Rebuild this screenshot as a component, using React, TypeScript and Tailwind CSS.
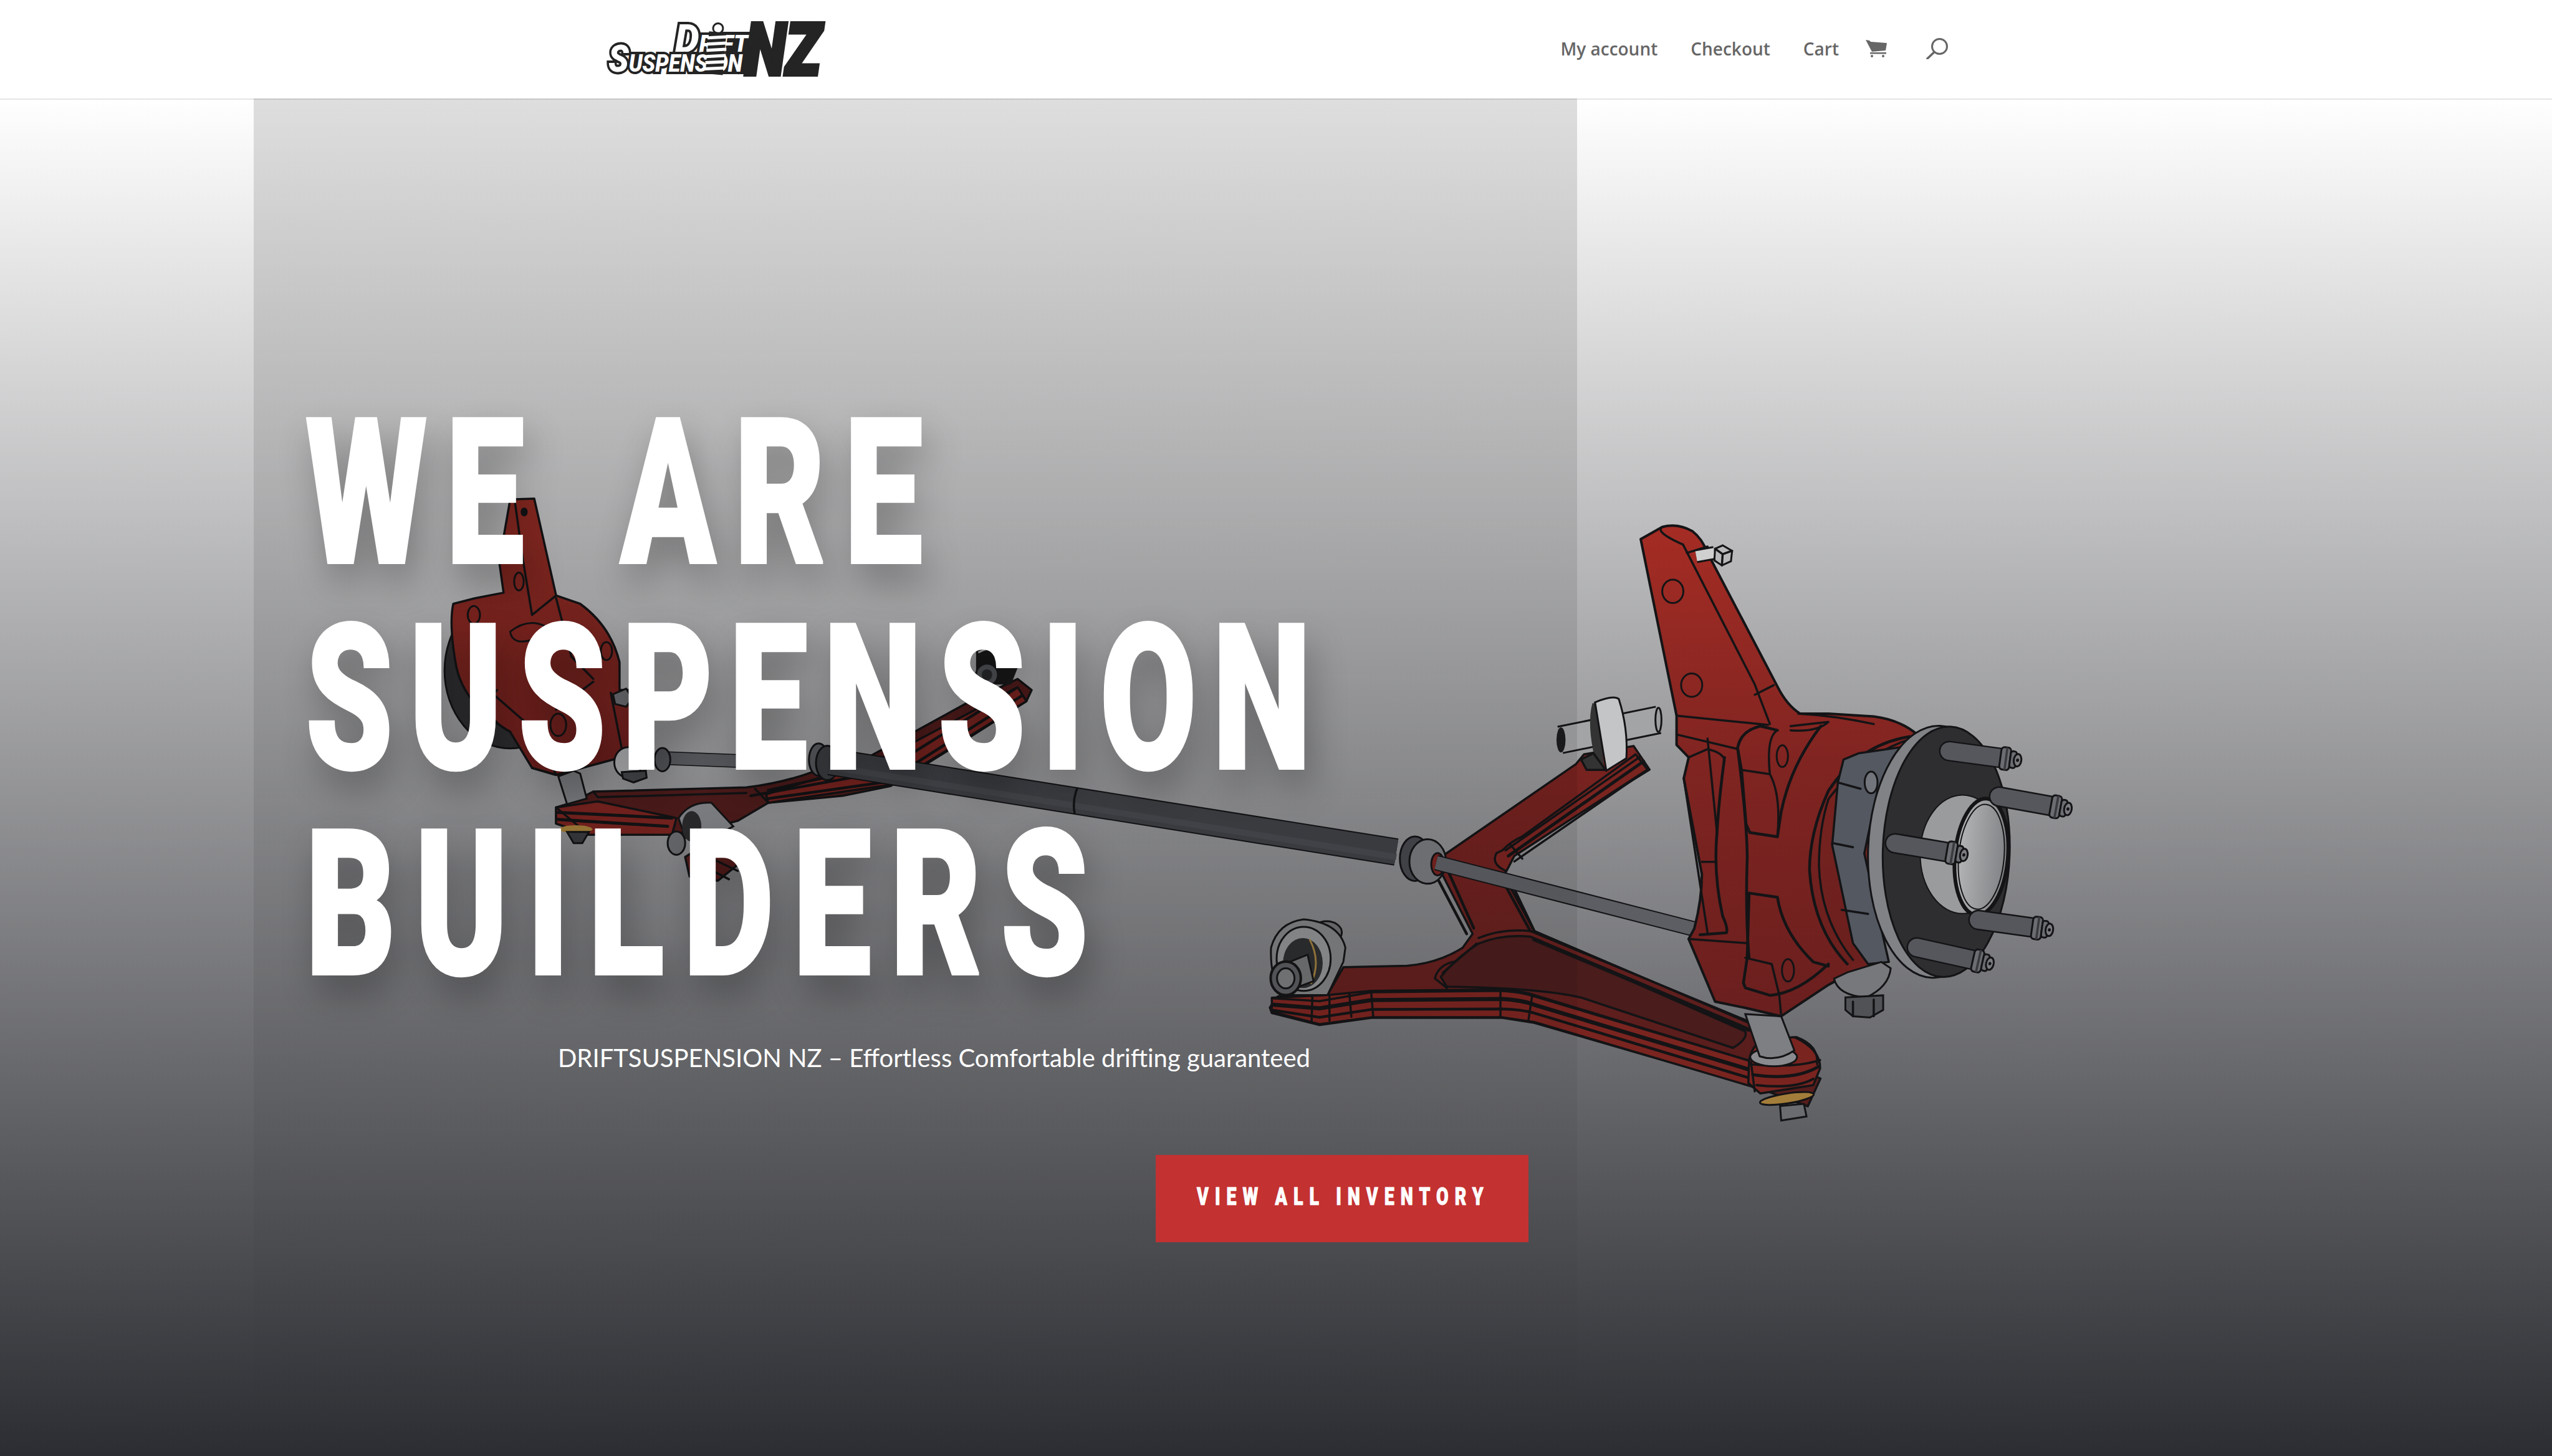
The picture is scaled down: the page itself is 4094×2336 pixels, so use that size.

import React from "react";

const K = "#141416";
const Z3 = "translate(2400 800) scale(0.6059 0.6697)";
const Z6 = "translate(1900 1150) scale(0.6378 0.4464)";
const Z4 = "translate(650 750) scale(0.7018 0.4464)";

function L({ d, w = 3.5, c = K, f = "none" }: { d: string; w?: number; c?: string; f?: string }) {
  return <path d={d} fill={f} stroke={c} strokeWidth={w} strokeLinejoin="round" strokeLinecap="round" />;
}

function Stud({ x1, y1, x2, y2 }: { x1: number; y1: number; x2: number; y2: number }) {
  const a = (Math.atan2(y2 - y1, x2 - x1) * 180) / Math.PI;
  return (
    <g>
      <path d={`M${x1} ${y1} L${x2} ${y2}`} stroke={K} strokeWidth={33} strokeLinecap="round" />
      <path d={`M${x1} ${y1} L${x2} ${y2}`} stroke="#55575c" strokeWidth={28} strokeLinecap="round" />
      <g transform={`translate(${x2} ${y2}) rotate(${a}) scale(0.6059 0.6697)`}>
        <rect x={0} y={-27} width={26} height={54} rx={8} fill="#6b6d72" stroke={K} strokeWidth={3} />
        <rect x={12} y={-27} width={6} height={54} fill="#3a3b3e" />
        <rect x={26} y={-20} width={16} height={40} rx={6} fill="#6b6d72" stroke={K} strokeWidth={3} />
        <ellipse cx={46} cy={0} rx={10} ry={15} fill="#7a7c80" stroke={K} strokeWidth={3} />
        <circle cx={46} cy={0} r={4} fill={K} />
      </g>
    </g>
  );
}

function RightAssembly() {
  return (
    <g>
      {/* thick tie rod */}
      <path d="M1331 1222 L2240 1367" stroke={K} strokeWidth={44} />
      <path d="M1331 1222 L2240 1367" stroke="#3e4045" strokeWidth={40} />
      <path d="M1331 1230 L2240 1375" stroke="#46484d" strokeWidth={10} />
      <L d="M1728 1265 Q1720 1285 1724 1305" />

      {/* lower arm */}
      <g transform={Z6}>
        <L
          f="url(#armRed)"
          d="M215 1045 L235 1005 L360 1000 L400 900 L560 895 Q640 885 700 830 L725 780 L650 570 L640 510 L660 490 L985 170 L1005 135 L1130 105 L1170 190 L830 490 L805 540 L815 600 L880 770 L1420 1100 L1460 1220 L1600 1300 L1568 1400 L1440 1332 L880 1100 L800 1082 L470 1082 L340 1108 L220 1065 Z"
        />
        <L f="#4a1c1c" d="M645 935 Q680 870 740 815 Q800 780 870 790 L1410 1130 Q1420 1155 1380 1190 L1000 1010 Q900 975 660 970 Z" />
        {/* upper branch bands */}
        <L f="#7a2420" d="M800 480 Q820 450 850 430 L1135 135 L1165 190 L830 500 L810 555 Q770 530 785 490 Z" />
        <L w={5} d="M815 500 L1155 160" />
        <L d="M808 480 L1145 145" />
        <L d="M830 520 L1165 190" />
        <L d="M820 460 L850 510" />
        <L d="M640 590 L710 780 M665 560 L728 760 M805 600 L870 770 M820 590 L880 770" w={4.5} />
        {/* lower bands */}
        <L f="#7a2420" d="M220 1010 L360 1000 L470 985 L800 980 Q850 985 880 1000 L1430 1240 L1430 1330 L880 1097 L800 1080 L470 1080 L340 1105 L220 1060 Z" />
        <L w={6.5} d="M225 1035 L340 1048 L470 1018 L800 1014 Q850 1018 880 1035 L1430 1272" />
        <L d="M225 1012 L340 1022 L470 990 L800 985 Q850 990 880 1005 L1430 1240" />
        <L w={4.5} d="M225 1055 L340 1080 L470 1052 L800 1050 Q850 1052 880 1065 L1430 1302" />
        <L d="M365 1005 L365 1092 M415 995 L420 1078 M470 990 L475 1078 M795 985 L795 1078 M875 1000 L865 1095 M322 1005 L320 1095" />
        <L w={6.5} d="M880 800 L1420 1125" />
        <L d="M870 770 L1420 1095" />
        <L d="M740 795 Q800 760 870 770 M680 880 Q640 890 630 940 L660 975 M735 815 L650 920" />

        {/* lower-left bushing */}
        <ellipse cx={358} cy={775} rx={38} ry={40} fill="#6b6c6e" stroke={K} strokeWidth={3} />
        <path d="M240 1000 L360 1000 L400 880 L405 830 Q390 740 300 728 Q235 740 218 830 Q215 920 240 1000 Z" fill="#7d7e80" stroke={K} strokeWidth={3} />
        <ellipse cx={300} cy={870} rx={68} ry={115} fill="#8d8e90" stroke={K} strokeWidth={3} />
        <ellipse cx={298} cy={885} rx={50} ry={90} fill="#2c2d2e" />
        <path d="M315 800 Q345 880 318 960" stroke="#9a7a3e" strokeWidth={3} fill="none" />
        <path d="M240 895 L310 855 L325 950 L260 985 Z" fill="#6f7072" stroke={K} strokeWidth={3} />
        <ellipse cx={255} cy={940} rx={38} ry={60} fill="#58595c" stroke={K} strokeWidth={4} />
        <ellipse cx={255} cy={940} rx={22} ry={36} fill="#77787a" stroke={K} strokeWidth={3} />

        {/* collar */}
        <ellipse cx={580} cy={510} rx={38} ry={80} fill="#45474c" stroke={K} strokeWidth={3} />
        <ellipse cx={612} cy={520} rx={46} ry={80} fill="#76787c" stroke={K} strokeWidth={3} />
        <ellipse cx={637} cy={530} rx={16} ry={40} fill="#7a2420" stroke={K} strokeWidth={3} />
      </g>

      {/* thin tie rod */}
      <path d="M2304 1384 L2716 1490" stroke={K} strokeWidth={25} />
      <path d="M2304 1384 L2716 1490" stroke="#5c5e63" strokeWidth={21} />

      {/* bushing on the upper branch */}
      <g transform={Z3}>
        <path d="M170 578 L430 530" stroke={K} strokeWidth={46} />
        <path d="M170 578 L430 530" stroke="#a3a4a6" strokeWidth={40} />
        <ellipse cx={172} cy={578} rx={12} ry={30} fill="#1c1c1e" />
        <ellipse cx={430} cy={530} rx={8} ry={29} fill="#9d9ea0" stroke={K} strokeWidth={3} />
        <path d="M255 490 Q240 540 262 625 L285 640 L270 490 Z" fill="#333" />
        <path d="M262 488 Q310 470 325 480 Q350 550 345 622 L292 652 Q275 560 262 488 Z" fill="#c4c5c6" stroke={K} strokeWidth={3} />
        <L f="#333" d="M225 625 L258 610 L290 650 L240 650 Z" />
      </g>

      {/* lower bolt and eye */}
      <g transform={Z3}>
        <path d="M752 1455 L815 1450 L822 1480 L755 1490 Z" fill="#6a6c70" stroke={K} strokeWidth={3} />
        <ellipse cx={770} cy={1437} rx={72} ry={12} fill="#a37d3a" stroke={K} strokeWidth={3} transform="rotate(-8 770 1437)" />
        <L f="#7a2420" d="M670 1345 Q680 1300 720 1295 L790 1290 Q860 1320 858 1365 L840 1405 L700 1425 L668 1400 Z" />
        <L w={5} d="M680 1380 Q790 1395 855 1360" />
        <L d="M675 1355 Q790 1365 858 1345" />
        <L w={4} d="M690 1405 Q790 1415 840 1390" />
        <L d="M675 1350 L685 1420 M795 1290 Q855 1310 850 1355" />
        <ellipse cx={735} cy={1338} rx={62} ry={22} fill="#8a8b8e" stroke={K} strokeWidth={3} />
        <path d="M660 1235 L755 1240 L790 1322 Q745 1350 698 1336 Z" fill="#7e7f82" stroke={K} strokeWidth={3} />
      </g>

      {/* steering knuckle */}
      <g transform={Z3}>
        <L
          f="url(#knuckle)"
          w={4}
          d="M383 97 L440 68 Q480 58 520 78 Q545 95 560 130 L745 450 Q770 495 805 515 L880 515 L1000 522 Q1070 530 1115 565 L1000 800 L1020 1110 L1005 1130 L940 1135 L880 1165 L755 1240 L660 1220 L580 1205 L510 1055 L525 1030 Q545 960 545 900 L497 670 L510 620 L478 590 L478 520 Z"
        />
        <path d="M1095 572 Q960 590 880 700 Q830 800 830 890 Q840 1030 930 1115 L1000 1110 L1000 600 Z" fill="#5f1f1c" opacity={0.25} />
        <L d="M440 68 Q420 80 495 110 L685 445 L725 540 M505 130 L560 115 M685 470 L735 447" />
        <ellipse cx={468} cy={222} rx={28} ry={28} fill="none" stroke={K} strokeWidth={3} />
        <ellipse cx={518} cy={447} rx={28} ry={28} fill="none" stroke={K} strokeWidth={3} />
        <L d="M478 520 L720 542 M478 565 L640 600 M780 545 Q830 540 880 535 Q850 560 780 555" />
        <L w={4.5} d="M640 595 Q650 555 700 545 L745 555 M640 600 L650 650 L662 780 L672 800 L745 810 L755 750 Q780 640 860 545" />
        <L d="M650 650 L725 660 Q755 710 745 810 M745 555 Q715 570 725 660" />
        <ellipse cx={758} cy={617} rx={15} ry={26} fill="none" stroke={K} strokeWidth={3} />
        <L w={4.5} d="M670 945 L745 955 Q760 1040 840 1110 L880 1120 M670 945 L665 1100 L655 1160 L660 1172 L725 1190 Q800 1185 880 1115" />
        <L d="M660 1100 L730 1115 L750 1190 L755 1240" />
        <ellipse cx={773} cy={1130} rx={16} ry={27} fill="none" stroke={K} strokeWidth={3} />
        <L w={4.5} d="M605 620 Q590 720 585 800 Q575 900 600 1000 Q615 1030 610 1040 L540 1045 M640 600 Q665 780 665 860 Q660 1000 670 1100" />
        <L d="M497 670 L560 1040 M560 575 L585 800 M510 620 L560 600 Q605 610 605 630 M545 870 L580 870 M510 1055 L665 1065" />
        <L w={4.5} d="M1095 570 Q960 590 880 700 Q830 800 830 890 Q840 1030 930 1115" />
        <L d="M1110 572 Q970 610 880 720 Q855 790 855 880 Q860 1010 945 1105 M800 515 Q900 520 1000 540" />

        {/* grey carrier */}
        <L f="#535861" d="M920 625 L960 610 L1075 595 L1010 700 L975 850 L1040 1110 L985 1115 L945 1065 L890 830 L905 680 Z" />
        <L d="M905 680 L965 695 M890 825 L945 835 M915 985 L985 995" />
        <ellipse cx={993} cy={680} rx={17} ry={26} fill="#72767c" stroke={K} strokeWidth={3} />

        {/* lower ball joint */}
        <path d="M895 1150 Q905 1190 980 1195 Q1040 1170 1045 1125 L1020 1110 L930 1135 Z" fill="#77787b" stroke={K} strokeWidth={3} />
        <path d="M925 1195 L1025 1190 L1025 1225 L990 1243 L945 1240 L925 1225 Z" fill="#505256" stroke={K} strokeWidth={3} />
        <L d="M945 1205 L945 1240 M1000 1200 L1000 1240" />

        {/* hub */}
        <ellipse cx={1165} cy={846} rx={180} ry={302} fill="#818286" stroke={K} strokeWidth={3} transform="rotate(2 1165 846)" />
        <ellipse cx={1192} cy={846} rx={168} ry={300} fill="#2e2e31" stroke={K} strokeWidth={3} transform="rotate(2 1192 846)" />
        <ellipse cx={1235} cy={852} rx={112} ry={142} fill="#9a9b9d" stroke={K} strokeWidth={2} />
        <ellipse cx={1285} cy={858} rx={70} ry={140} fill="url(#hubGrey)" stroke={K} strokeWidth={6} transform="rotate(6 1285 858)" />
        <ellipse cx={1285} cy={858} rx={60} ry={126} fill="none" stroke={K} strokeWidth={2} transform="rotate(6 1285 858)" />
      </g>
      <Stud x1={3127} y1={1205} x2={3209} y2={1216} />
      <Stud x1={3207} y1={1278} x2={3290} y2={1293} />
      <Stud x1={3040} y1={1353} x2={3123} y2={1367} />
      <Stud x1={3174} y1={1476} x2={3260} y2={1488} />
      <Stud x1={3075} y1={1520} x2={3165} y2={1540} />

      {/* small bolt on top of the arm */}
      <g transform={Z3}>
        <path d="M530 138 L578 130" stroke={K} strokeWidth={22} />
        <path d="M530 138 L578 130" stroke="#d0d0d0" strokeWidth={16} />
        <path d="M580 120 L600 112 L625 125 L622 150 L598 160 L578 148 Z" fill="none" stroke={K} strokeWidth={3} />
        <L d="M580 120 L600 133 L625 125 M600 133 L598 160" />
      </g>
    </g>
  );
}

function LeftAssembly() {
  return (
    <g transform={Z4}>
      {/* dark lower arm tail */}
      <L f="#5a1e1c" d="M640 1400 L710 1330 L790 1390 L715 1485 L650 1470 Z" />
      <L d="M655 1410 L740 1480 M680 1390 L760 1450" />
      {/* arm */}
      <L f="#4f1c1b" d="M345 1222 L380 1205 L430 1165 L780 1150 Q860 1135 930 1095 L1060 1040 L1280 850 L1400 760 L1432 800 L1420 840 L1300 960 L1110 1145 L1000 1180 L830 1205 L760 1270 L690 1300 L600 1320 L420 1320 L345 1280 Z" />
      <L f="#7a2420" d="M1100 1040 L1400 790 L1420 840 L1110 1140 L830 1205 L825 1175 Z" />
      <L w={4.5} d="M830 1190 L1100 1130 L1410 820 M790 1180 L1090 1095 L1395 795 M830 1160 L1060 1080" />
      <L d="M800 1155 L830 1205 M430 1165 L440 1185 L780 1170" />
      <L f="#7a2420" d="M345 1222 L440 1200 L620 1260 L610 1320 L420 1320 L345 1280 Z" />
      <L w={5} d="M350 1240 L610 1260 M350 1265 L600 1290" />
      <L d="M345 1222 L420 1320" />
      {/* central rod pieces */}
      <path d="M600 1045 L765 1055" stroke={K} strokeWidth={22} />
      <path d="M600 1045 L765 1055" stroke="#5b5d62" strokeWidth={19} />
      {/* bushing front */}
      <path d="M625 1260 Q650 1200 700 1205 L750 1290 L680 1350 L640 1330 Z" fill="#85868a" stroke={K} strokeWidth={3} />
      <ellipse cx={655} cy={1290} rx={22} ry={55} fill="#2c2c2e" />
      <ellipse cx={620} cy={1350} rx={20} ry={42} fill="#6c6d70" stroke={K} strokeWidth={3} />
      {/* ball bolt */}
      <ellipse cx={390} cy={1300} rx={38} ry={14} fill="#a37d3a" />
      <path d="M370 1310 L420 1310 L405 1350 L385 1350 Z" fill="#3a3b3e" stroke={K} strokeWidth={3} />
      {/* rod */}
      <path d="M385 1090 L350 1110 L370 1210 L415 1190 L400 1100 Z" fill="#7f8083" stroke={K} strokeWidth={3} />
      {/* disc */}
      <ellipse cx={240} cy={730} rx={150} ry={280} fill="#2e2e31" stroke={K} strokeWidth={3} />
      {/* knuckle */}
      <L
        f="url(#knuckleL)"
        d="M110 490 L160 470 L225 450 L215 340 L240 115 L295 112 L345 460 L400 490 Q470 570 490 700 L490 800 L510 800 L520 1010 L475 1050 L345 1105 L290 1080 L240 950 Q130 850 115 700 Q100 560 110 490 Z"
      />
      <L d="M250 115 L270 340 L290 530 M345 460 L290 530 M345 470 L380 680 L430 760 M210 800 Q160 880 240 950 M290 1080 L345 1105 L300 950 L205 820 M430 770 L345 870 M470 810 L495 1010" />
      <ellipse cx={157} cy={530} rx={14} ry={32} fill="none" stroke={K} strokeWidth={3} />
      <ellipse cx={260} cy={410} rx={11} ry={32} fill="none" stroke={K} strokeWidth={3} />
      <ellipse cx={460} cy={660} rx={13} ry={32} fill="none" stroke={K} strokeWidth={3} />
      <ellipse cx={350} cy={925} rx={18} ry={40} fill="none" stroke={K} strokeWidth={3} />
      <ellipse cx={272} cy={160} rx={8} ry={16} fill={K} />
      <path d="M240 590 Q280 540 320 570 L290 620 Q245 640 240 590 Z" fill="#7f2420" stroke={K} strokeWidth={3} />
      {/* nuts beside the rod */}
      <path d="M475 815 L505 795 L520 830 L505 860 L480 850 Z" fill="#6c6d70" stroke={K} strokeWidth={3} />
      <ellipse cx={510} cy={1060} rx={32} ry={55} fill="#b0b1b3" stroke={K} strokeWidth={3} />
      <ellipse cx={588} cy={1050} rx={18} ry={42} fill="#55575b" stroke={K} strokeWidth={3} />
      <path d="M495 1095 L550 1090 L552 1115 L522 1132 L498 1118 Z" fill="#45474b" stroke={K} strokeWidth={3} />
      {/* collar on the thick rod */}
      <ellipse cx={945} cy={1050} rx={22} ry={58} fill="#585a5e" stroke={K} strokeWidth={3} />
      <ellipse cx={965} cy={1062} rx={26} ry={62} fill="#3c3d41" stroke={K} strokeWidth={3} />
      {/* bush behind the S */}
      <path d="M1305 640 L1400 640 L1400 720 L1385 780 L1305 780 Z" fill="#19191b" />
      <ellipse cx={1330} cy={745} rx={25} ry={40} fill="#55575b" stroke="#19191b" strokeWidth={3} />
      <ellipse cx={1330} cy={745} rx={12} ry={20} fill="#2b2c2e" />
      <path d="M1310 665 Q1340 640 1360 650" stroke="#b8b9bb" strokeWidth={3} fill="none" />
    </g>
  );
}

function Illustration() {
  return (
    <svg
      viewBox="0 158 4094 2178"
      className="absolute inset-0 h-full w-full [&_*]:[vector-effect:non-scaling-stroke]"
      aria-hidden="true"
    >
      <defs>
        <linearGradient id="knuckle" x1="0" y1="60" x2="0" y2="1240" gradientUnits="userSpaceOnUse">
          <stop offset="0" stopColor="#a52c24" />
          <stop offset="0.5" stopColor="#7f2421" />
          <stop offset="1" stopColor="#6a1f1e" />
        </linearGradient>
        <linearGradient id="knuckleL" x1="0" y1="100" x2="0" y2="1100" gradientUnits="userSpaceOnUse">
          <stop offset="0" stopColor="#8e2a22" />
          <stop offset="1" stopColor="#6f201e" />
        </linearGradient>
        <linearGradient id="armRed" x1="0" y1="100" x2="0" y2="1300" gradientUnits="userSpaceOnUse">
          <stop offset="0" stopColor="#7b2320" />
          <stop offset="1" stopColor="#561d1c" />
        </linearGradient>
        <linearGradient id="hubGrey" x1="1215" y1="0" x2="1355" y2="0" gradientUnits="userSpaceOnUse">
          <stop offset="0" stopColor="#b6b7b8" />
          <stop offset="1" stopColor="#808184" />
        </linearGradient>
      </defs>
      <LeftAssembly />
      <RightAssembly />
    </svg>
  );
}

function Logo() {
  return (
    <svg viewBox="972 35 352 90" className="h-[90px] w-[352px] overflow-visible" role="img" aria-label="Drift Suspension NZ">
      <g fontFamily="Roboto, sans-serif" fontWeight={900} fontStyle="italic">
        <rect x="1150" y="52" width="60" height="32" fill="#242424" />
        <rect x="1110" y="84" width="100" height="36" fill="#242424" />
        <text x="1088" y="85" textLength="117" lengthAdjust="spacingAndGlyphs" fill="#fff" stroke="#242424" strokeWidth="8" paintOrder="stroke">
          <tspan fontSize="62">D</tspan>
          <tspan fontSize="38">RIFT</tspan>
        </text>
        <text x="981" y="116" textLength="215" lengthAdjust="spacingAndGlyphs" fill="#fff" stroke="#242424" strokeWidth="8" paintOrder="stroke">
          <tspan fontSize="60">S</tspan>
          <tspan fontSize="38">USPENSION</tspan>
        </text>
        <text x="1200" y="121" fontSize="116" textLength="122" lengthAdjust="spacingAndGlyphs" fill="#242424" stroke="#242424" strokeWidth="6">NZ</text>
      </g>
      {/* coil spring */}
      <g transform="rotate(5 1150 80)">
        <circle cx="1154" cy="46" r="8" fill="#fff" stroke="#242424" strokeWidth="3" />
        <rect x="1140" y="52" width="28" height="68" fill="#242424" />
        {[58, 68, 78, 88, 98, 108].map((y) => (
          <rect key={y} x="1138" y={y} width="32" height="5" fill="#fff" transform={`rotate(-8 1154 ${y})`} />
        ))}
      </g>
    </svg>
  );
}

function CartIcon() {
  return (
    <svg viewBox="0 0 34 28" className="h-[28px] w-[34px]" fill="#666" aria-hidden="true">
      <path d="M0 0 L6 1 L8 3 L34 5 L32 17 L10 19 Z" />
      <rect x="7" y="20" width="26" height="2.5" />
      <circle cx="10" cy="26" r="2" />
      <circle cx="28" cy="26" r="2" />
    </svg>
  );
}

function SearchIcon() {
  return (
    <svg viewBox="0 0 35 34" className="h-[34px] w-[35px]" fill="none" stroke="#666" aria-hidden="true">
      <circle cx="21.5" cy="13.5" r="12" strokeWidth="3" />
      <path d="M12.5 23 L2 33" strokeWidth="3.5" strokeLinecap="round" />
    </svg>
  );
}

export default function App() {
  return (
    <div className="flex h-[2336px] w-[4094px] flex-col overflow-hidden bg-white">
      <header className="flex h-[158px] shrink-0 items-center justify-between bg-white pl-[967px] pr-[969px]">
        <Logo />
        <nav className="flex items-center pb-[2px] font-['Open_Sans',sans-serif] text-[28px] font-semibold text-[#666666]">
          <a className="mr-[53px]">My account</a>
          <a className="mr-[53px]">Checkout</a>
          <a className="mr-[43px]">Cart</a>
          <CartIcon />
          <span className="ml-[63px]">
            <SearchIcon />
          </span>
        </nav>
      </header>

      <main className="relative flex-1 bg-[linear-gradient(180deg,#ffffff_0%,#2c2d32_100%)] pl-[407px]">
        <Illustration />
        <section className="relative flex h-full w-[2123px] flex-col bg-[linear-gradient(180deg,rgba(0,0,0,0.13)_0%,rgba(0,0,0,0.08)_60%,rgba(0,0,0,0)_100%)] pl-[83px] pr-[78px] pt-[469px]">
          <div className="w-[1612px]">
            <h1 className="font-['Roboto',sans-serif] text-[326px] leading-[330px] font-black text-white [-webkit-text-stroke:4px_#ffffff] [text-shadow:14px_30px_70px_rgba(0,0,0,0.3)]">
              <span className="block origin-left scale-x-[0.69] whitespace-nowrap tracking-[43px] [word-spacing:56px]">WE ARE</span>
              <span className="block origin-left scale-x-[0.69] whitespace-nowrap tracking-[37px]">SUSPENSION</span>
              <span className="block origin-left scale-x-[0.69] whitespace-nowrap tracking-[44px]">BUILDERS</span>
            </h1>
            <p className="mt-[50px] text-right font-['Lato',sans-serif] text-[40px] leading-[60px] text-white">
              DRIFTSUSPENSION NZ – Effortless Comfortable drifting guaranteed
            </p>
          </div>
          <a className="mt-[126px] flex h-[140px] w-[598px] items-center self-end bg-[#c33131] pb-[5px] pl-[66px] font-['Roboto',sans-serif] text-[38px] font-black whitespace-nowrap text-white [-webkit-text-stroke:1px_#ffffff]">
            <span className="block origin-left scale-x-[0.75] tracking-[13.4px]">VIEW ALL INVENTORY</span>
          </a>
        </section>
        <div className="absolute inset-x-0 top-0 h-[2px] bg-black/10" />
      </main>
    </div>
  );
}
